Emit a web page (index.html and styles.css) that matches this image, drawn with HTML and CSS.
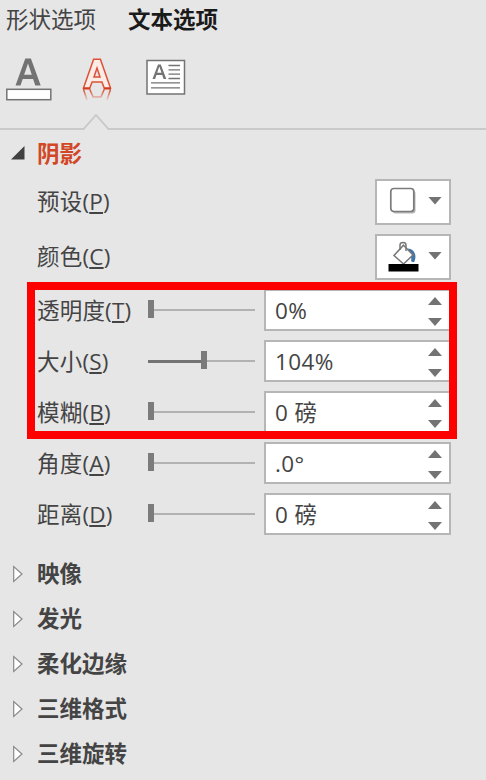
FILE: index.html
```html
<!DOCTYPE html>
<html lang="zh-CN">
<head>
    <meta charset="UTF-8">
    <meta name="viewport" content="width=device-width, initial-scale=1.0">
    <title>文本选项</title>
    <link rel="stylesheet" href="styles.css">
</head>
<body>
    <div class="tabs">
        <span class="tab">形状选项</span>
        <span class="tab active">文本选项</span>
    </div>

    <div class="toolbar">
        <!-- text fill -->
        <svg class="icon-fill" width="46" height="44" viewBox="0 0 46 44">
            <path d="M9.500 28.500L19.300 1.500h5.600L34.700 28.500h-5.400l-2.200-6.500H16.700l-2.200 6.500zM18.100 17.800h7.700L22 6.500z" fill="#737373" fill-rule="evenodd"/>
            <rect x=".8" y="32.300" width="44" height="10.400" fill="#fff" stroke="#737373" stroke-width="1.500"/>
        </svg>
        <!-- text effects -->
        <svg class="icon-effect" width="30" height="46" viewBox="0 0 30 46">
            <defs>
                <linearGradient id="fade" x1="0" y1="0" x2="0" y2="1">
                    <stop offset="0" stop-color="#d9492c"/>
                    <stop offset="1" stop-color="#d9492c" stop-opacity=".15"/>
                </linearGradient>
            </defs>
            <path d="M1.500 31L11.600 2.200h6.800L28.500 31h-6.300l-2.300-6h-9.800l-2.300 6zM12 20h6L15 11z" fill="#fdebe6" fill-rule="evenodd" stroke="#dc5135" stroke-width="1.500"/>
            <path d="M1 31.700h7.200M21.800 31.700H29" stroke="#d33b1d" stroke-width="1.800"/>
            <path d="M1.500 32.500l3.500 10.500M7.800 32.500l3.300 7.500h7.800l3.300-7.500M28.500 32.500L25 43" fill="none" stroke="url(#fade)" stroke-width="1.500"/>
        </svg>
        <!-- text box -->
        <svg class="icon-box" width="40" height="36" viewBox="0 0 40 36">
            <rect x="1" y="1.500" width="37.500" height="33.500" fill="#fff" stroke="#737373" stroke-width="1.500"/>
            <path d="M6.500 20L12 5.500h2.800l5.500 14.500h-2.700l-1.400-4h-5.800l-1.300 4zM11.200 13.800h4.300l-2.200-6.200z" fill="#737373" fill-rule="evenodd"/>
            <path d="M22.500 6.500H34M22.500 10.800H34M22.500 15.200H34M22.500 19.500H34M5 23.800H34M5 28.800H34" stroke="#737373" stroke-width="1.300"/>
        </svg>
    </div>

    <div class="divider">
        <svg width="28" height="17" viewBox="0 0 28 17">
            <path d="M0 15h1.500L14 1 26.500 15H28" fill="none" stroke="#c8c8c8" stroke-width="1.800"/>
        </svg>
    </div>

    <div class="section open">
        <svg class="arrow" width="16" height="16" viewBox="0 0 16 16"><path d="M14.500 1v13.500H1z" fill="#404040"/></svg>
        <span>阴影</span>
    </div>

    <div class="row pick-row">
        <label>预设(<u>P</u>)</label>
        <div class="picker">
            <svg width="32" height="32" viewBox="0 0 32 32">
                <rect x="5.500" y="4.500" width="23" height="23" rx="3" fill="#b8b8b8"/>
                <rect x="3.800" y="2.500" width="23" height="23" rx="3" fill="#fff" stroke="#7b7b7b" stroke-width="1.700"/>
            </svg>
            <i class="down"></i>
        </div>
    </div>
    <div class="row pick-row">
        <label>颜色(<u>C</u>)</label>
        <div class="picker">
            <svg width="32" height="32" viewBox="0 0 32 32">
                <path d="M20.500 7.500c6 0 9.800 5.500 7 13-.7 1-2.500 1-3.400-.5.500-4 0-7.500-3.600-12.500z" fill="#3f77ad"/>
                <path d="M16.500 4.200L26 14 16.500 23 7 14.500z" fill="#fff" stroke="#777" stroke-width="1.500"/>
                <path d="M13 9V4c0-3.500 6-3.500 6 0V10" fill="none" stroke="#777" stroke-width="1.500"/>
                <rect x="1.500" y="23" width="30" height="7.500" fill="#000"/>
            </svg>
            <i class="down"></i>
        </div>
    </div>

    <div class="marked">
        <div class="row">
            <label>透明度(<u>T</u>)</label>
            <div class="slider"><i class="thumb"></i></div>
            <div class="spin"><span>0%</span><div class="btns"><i class="up"></i><i class="down"></i></div></div>
        </div>
        <div class="row">
            <label>大小(<u>S</u>)</label>
            <div class="slider"><i class="filled"></i><i class="thumb"></i></div>
            <div class="spin"><span>104%</span><div class="btns"><i class="up"></i><i class="down"></i></div></div>
        </div>
        <div class="row">
            <label>模糊(<u>B</u>)</label>
            <div class="slider"><i class="thumb"></i></div>
            <div class="spin"><span>0 磅</span><div class="btns"><i class="up"></i><i class="down"></i></div></div>
        </div>
        <div class="frame"></div>
    </div>
    <div class="row">
        <label>角度(<u>A</u>)</label>
        <div class="slider"><i class="thumb"></i></div>
        <div class="spin"><span>.0°</span><div class="btns"><i class="up"></i><i class="down"></i></div></div>
    </div>
    <div class="row">
        <label>距离(<u>D</u>)</label>
        <div class="slider"><i class="thumb"></i></div>
        <div class="spin"><span>0 磅</span><div class="btns"><i class="up"></i><i class="down"></i></div></div>
    </div>

    <div class="closed-list">
        <div class="section">
            <svg class="arrow" width="16" height="18" viewBox="0 0 16 18"><path d="M3.700 1.500v15L12 9z" fill="#fff" stroke="#888" stroke-width="1.200"/></svg>
            <span>映像</span>
        </div>
        <div class="section">
            <svg class="arrow" width="16" height="18" viewBox="0 0 16 18"><path d="M3.700 1.500v15L12 9z" fill="#fff" stroke="#888" stroke-width="1.200"/></svg>
            <span>发光</span>
        </div>
        <div class="section">
            <svg class="arrow" width="16" height="18" viewBox="0 0 16 18"><path d="M3.700 1.500v15L12 9z" fill="#fff" stroke="#888" stroke-width="1.200"/></svg>
            <span>柔化边缘</span>
        </div>
        <div class="section">
            <svg class="arrow" width="16" height="18" viewBox="0 0 16 18"><path d="M3.700 1.500v15L12 9z" fill="#fff" stroke="#888" stroke-width="1.200"/></svg>
            <span>三维格式</span>
        </div>
        <div class="section">
            <svg class="arrow" width="16" height="18" viewBox="0 0 16 18"><path d="M3.700 1.500v15L12 9z" fill="#fff" stroke="#888" stroke-width="1.200"/></svg>
            <span>三维旋转</span>
        </div>
    </div>
</body>
</html>
```
FILE: styles.css
```css
* {
    box-sizing: border-box;
}
body {
    margin: 0;
    width: 486px;
    height: 780px;
    overflow: hidden;
    background-color: #e6e6e6;
    color: #444;
    font-family: "Open Sans", "Noto Sans CJK SC", sans-serif;
    font-size: 22.5px;
    line-height: 30px;
}
.tabs {
    display: flex;
    gap: 32px;
    height: 40px;
    padding: 5px 0 0 6px;
}
.tab.active {
    color: #1a1a1a;
    font-weight: bold;
}
.toolbar {
    display: flex;
    align-items: flex-start;
    height: 74px;
    padding: 17px 0 0 6px;
}
.icon-effect {
    margin-left: 30px;
}
.icon-box {
    margin: 2px 0 0 34px;
}
.divider {
    display: flex;
    height: 17px;
}
.divider svg {
    display: block;
}
.divider::before, .divider::after {
    content: "";
    height: 2px;
    margin-top: 14px;
    background-color: #cacaca;
}
.divider::before {
    width: 82px;
}
.divider::after {
    flex: 1;
}
.section {
    display: flex;
    align-items: center;
    height: 45px;
    padding-left: 10px;
    font-weight: bold;
}
.section .arrow {
    margin-right: 11px;
}
.section span {
    padding-top: 1px;
}
.section.open {
    height: 44px;
    color: #d24726;
}
.closed-list {
    padding-top: 11px;
}
.row {
    display: flex;
    height: 51px;
    padding: 4px 35px 0 37px;
}
.row label {
    width: 111px;
    line-height: 43px;
    letter-spacing: 0.2px;
    white-space: nowrap;
}
.row u {
    text-decoration-thickness: 1.5px;
    text-underline-offset: 2px;
}
.pick-row {
    height: 55px;
    justify-content: space-between;
}
.pick-row label {
    line-height: 45px;
}
.picker {
    display: flex;
    align-items: center;
    width: 76px;
    height: 46px;
    padding-left: 10px;
    background: #fff;
    border: 2px solid #b6b6b6;
}
.picker .down {
    margin: 0 0 3px 9px;
}
.up, .down {
    width: 14px;
    height: 8px;
    background-color: #737373;
}
.up {
    clip-path: polygon(0 100%, 50% 0, 100% 100%);
}
.down {
    clip-path: polygon(0 0, 100% 0, 50% 100%);
}
.slider {
    position: relative;
    display: flex;
    align-items: center;
    width: 107px;
    height: 42px;
    background: linear-gradient(#b2b2b2, #b2b2b2) 0 20px / 107px 2px no-repeat;
}
.thumb {
    width: 6px;
    height: 18px;
    margin-bottom: 2px;
    background-color: #7b7b7b;
}
.filled {
    width: 53px;
    height: 3px;
    background-color: #737373;
}
.spin {
    display: flex;
    justify-content: space-between;
    width: 187px;
    height: 42px;
    margin-left: 9px;
    padding: 0 7px 0 9px;
    line-height: 39px;
    letter-spacing: 0.4px;
    background: #fff;
    border: 2px solid #b6b6b6;
}
.btns {
    display: flex;
    flex-direction: column;
    gap: 13px;
    padding-top: 6px;
}
.marked {
    position: relative;
}
.frame {
    position: absolute;
    left: 27px;
    top: -3px;
    width: 430px;
    height: 157px;
    border: 8px solid #fe0000;
}
```
